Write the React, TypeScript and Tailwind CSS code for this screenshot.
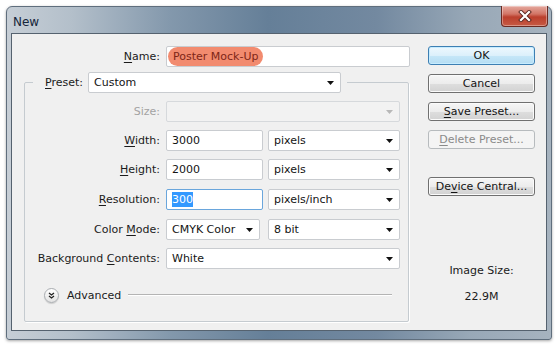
import React from 'react'

const font = { fontFamily: '"DejaVu Sans", Verdana, sans-serif' }

function Mn({ children }: { children: React.ReactNode }) {
  return <span className="underline decoration-1 underline-offset-[2px]">{children}</span>
}

function Caret({ disabled }: { disabled?: boolean }) {
  return (
    <svg width="7" height="4" viewBox="0 0 7 4" className="shrink-0">
      <path d="M0 0h7L3.5 4z" fill={disabled ? '#b8b8b8' : '#111'} />
    </svg>
  )
}

function Select({ value, w, disabled }: { value?: string; w: string; disabled?: boolean }) {
  return (
    <div
      className={`flex h-[21px] ${w} items-center justify-between rounded-[2px] border px-[5px] pr-[6px] ${
        disabled ? 'border-[#d6d9dc] bg-[#f2f2f2]' : 'border-[#c9ccd0] bg-white'
      }`}
    >
      <span className="text-[#141414]">{value}</span>
      <Caret disabled={disabled} />
    </div>
  )
}

function Input({ children, w, focus }: { children: React.ReactNode; w: string; focus?: boolean }) {
  return (
    <div
      className={`flex h-[21px] ${w} items-center rounded-[2px] border bg-white px-[5px] text-[#141414] ${
        focus ? 'border-[#6aa6dc]' : 'border-[#c9ccd0]'
      }`}
    >
      {children}
    </div>
  )
}

function Row({ label, children, gray }: { label: React.ReactNode; children: React.ReactNode; gray?: boolean }) {
  return (
    <div className="flex h-[21px] items-center gap-[6px]">
      <div className={`w-[135px] text-right ${gray ? 'text-[#a3a3a3]' : 'text-[#1b1b1b]'}`}>{label}</div>
      {children}
    </div>
  )
}

function Btn({ children, kind }: { children: React.ReactNode; kind?: 'default' | 'disabled' }) {
  const cls =
    kind === 'default'
      ? 'border-[#3d7fb3] bg-[linear-gradient(#eef8fe_0%,#dcf0fb_50%,#c6e7f8_51%,#b5ddf3_100%)] text-[#141414] shadow-[inset_0_0_0_1px_#c6ecff]'
      : kind === 'disabled'
        ? 'border-[#b7bbbe] bg-[#f4f4f4] text-[#8a8a8a]'
        : 'border-[#707070] bg-[linear-gradient(#f6f6f6_0%,#ececec_50%,#dedede_51%,#d2d2d2_100%)] text-[#141414] shadow-[inset_0_0_0_1px_#fbfbfb]'
  return (
    <div className={`flex h-[19px] w-[107px] items-center justify-center rounded-[3px] border ${cls}`}>
      {children}
    </div>
  )
}

export default function App() {
  return (
    <div className="h-[346px] w-[558px] bg-white pl-[6px] pt-[6px] text-[11px] leading-none" style={font}>
      <div className="flex h-[334px] w-[546px] flex-col rounded-t-[6px] rounded-b-[3px] border border-[#5f6e7d] bg-[linear-gradient(90deg,#c6ced6_0%,#b3bfca_12%,#8398ac_30%,#657f98_48%,#7389a0_68%,#98a8b7_85%,#a6b3bf_100%)] px-[4px] pb-[8px] shadow-[0_1px_3px_rgba(0,0,0,0.35)]">
        {/* title bar */}
        <div className="flex h-[26px] items-start justify-between">
          <div className="pl-[2px] pt-[9px] text-[12px] text-[#16263a]">New</div>
          <div className="-mt-px mr-[-1px] flex h-[21px] w-[47px] items-center justify-center rounded-b-[4px] border border-t-0 border-[#6a2a22] bg-[linear-gradient(#e4a89e_0%,#d27566_40%,#bb3f2d_55%,#c65a44_100%)] shadow-[inset_0_0_0_1px_rgba(255,255,255,0.35)]">
            <svg width="14" height="12" viewBox="0 0 14 12">
              <path d="M3 2l8 8M11 2l-8 8" stroke="#5a2620" strokeWidth="4" strokeLinecap="square" />
              <path d="M3 2l8 8M11 2l-8 8" stroke="#fff" strokeWidth="2.2" strokeLinecap="square" />
            </svg>
          </div>
        </div>

        {/* client */}
        <div className="flex flex-1 border border-[#55626f] bg-[#f0f0f0]">
          <div className="w-[398px] pl-[12px] pt-[12px]">
            <div className="flex h-[21px] items-center gap-[6px]">
              <div className="w-[136px] text-right text-[#1b1b1b]">
                <Mn>N</Mn>ame:
              </div>
              <div className="flex h-[21px] w-[244px] items-center rounded-[2px] border border-[#c9ccd0] bg-white pl-px">
                <span className="flex h-[19px] items-center rounded-full bg-[#f28b6f] px-[5px] text-[#7e2617]">
                  Poster Mock-Up
                </span>
              </div>
            </div>

            <fieldset className="mt-[5px] w-[385px] rounded-[2px] border border-[#c5cbd0] px-0 pb-[18px] shadow-[1px_1px_0_#fff]">
              <legend className="ml-[8px] flex h-[21px] items-center pl-[12px] pr-[6px]">
                <span className="mr-[5px] text-[#1b1b1b]">
                  <Mn>P</Mn>reset:
                </span>
                <Select value="Custom" w="w-[253px]" />
              </legend>

              <div className="flex flex-col">
                <div className="mt-[8px]">
                  <Row label="Size:" gray>
                    <Select w="w-[234px]" disabled />
                  </Row>
                </div>
                <div className="mt-[8px]">
                  <Row label={<><Mn>W</Mn>idth:</>}>
                    <Input w="w-[97px]">3000</Input>
                    <div className="ml-[-1px]">
                      <Select value="pixels" w="w-[132px]" />
                    </div>
                  </Row>
                </div>
                <div className="mt-[8px]">
                  <Row label={<><Mn>H</Mn>eight:</>}>
                    <Input w="w-[97px]">2000</Input>
                    <div className="ml-[-1px]">
                      <Select value="pixels" w="w-[132px]" />
                    </div>
                  </Row>
                </div>
                <div className="mt-[9px]">
                  <Row label={<><Mn>R</Mn>esolution:</>}>
                    <Input w="w-[97px]" focus>
                      <span className="bg-[#3399ff] py-[2px] text-white">300</span>
                    </Input>
                    <div className="ml-[-1px]">
                      <Select value="pixels/inch" w="w-[132px]" />
                    </div>
                  </Row>
                </div>
                <div className="mt-[9px]">
                  <Row label={<>Color <Mn>M</Mn>ode:</>}>
                    <Select value="CMYK Color" w="w-[94px]" />
                    <div className="ml-[2px]">
                      <Select value="8 bit" w="w-[132px]" />
                    </div>
                  </Row>
                </div>
                <div className="mt-[8px]">
                  <Row label={<>Background <Mn>C</Mn>ontents:</>}>
                    <Select value="White" w="w-[234px]" />
                  </Row>
                </div>
                <div className="mt-[18px] flex h-[16px] items-center pl-[19px] pr-[16px]">
                  <div className="flex h-[15px] w-[15px] items-center justify-center rounded-full border border-[#a9adb1] bg-[linear-gradient(#ffffff,#e3e3e3)] shadow-[0_1px_1px_rgba(0,0,0,0.15)]">
                    <svg width="7" height="7" viewBox="0 0 7 7">
                      <path d="M1 1l2.5 2L6 1M1 4l2.5 2L6 4" stroke="#222" strokeWidth="1.3" fill="none" />
                    </svg>
                  </div>
                  <span className="ml-[8px] text-[#1b1b1b]">Advanced</span>
                  <div className="ml-[7px] h-[2px] flex-1 border-t border-b border-t-[#b4b4b4] border-b-white" />
                </div>
              </div>
            </fieldset>
          </div>

          <div className="ml-[18px] flex w-[107px] flex-col pt-[12px]">
            <Btn kind="default">OK</Btn>
            <div className="mt-[9px]">
              <Btn>Cancel</Btn>
            </div>
            <div className="mt-[9px]">
              <Btn>
                <Mn>S</Mn>ave Preset...
              </Btn>
            </div>
            <div className="mt-[9px]">
              <Btn kind="disabled">
                <Mn>D</Mn>elete Preset...
              </Btn>
            </div>
            <div className="mt-[28px]">
              <Btn>
                De<Mn>v</Mn>ice Central...
              </Btn>
            </div>
            <div className="mt-[69px] text-center text-[#1b1b1b]">Image Size:</div>
            <div className="mt-[15px] text-center text-[#1b1b1b]">22.9M</div>
          </div>
        </div>
      </div>
    </div>
  )
}
